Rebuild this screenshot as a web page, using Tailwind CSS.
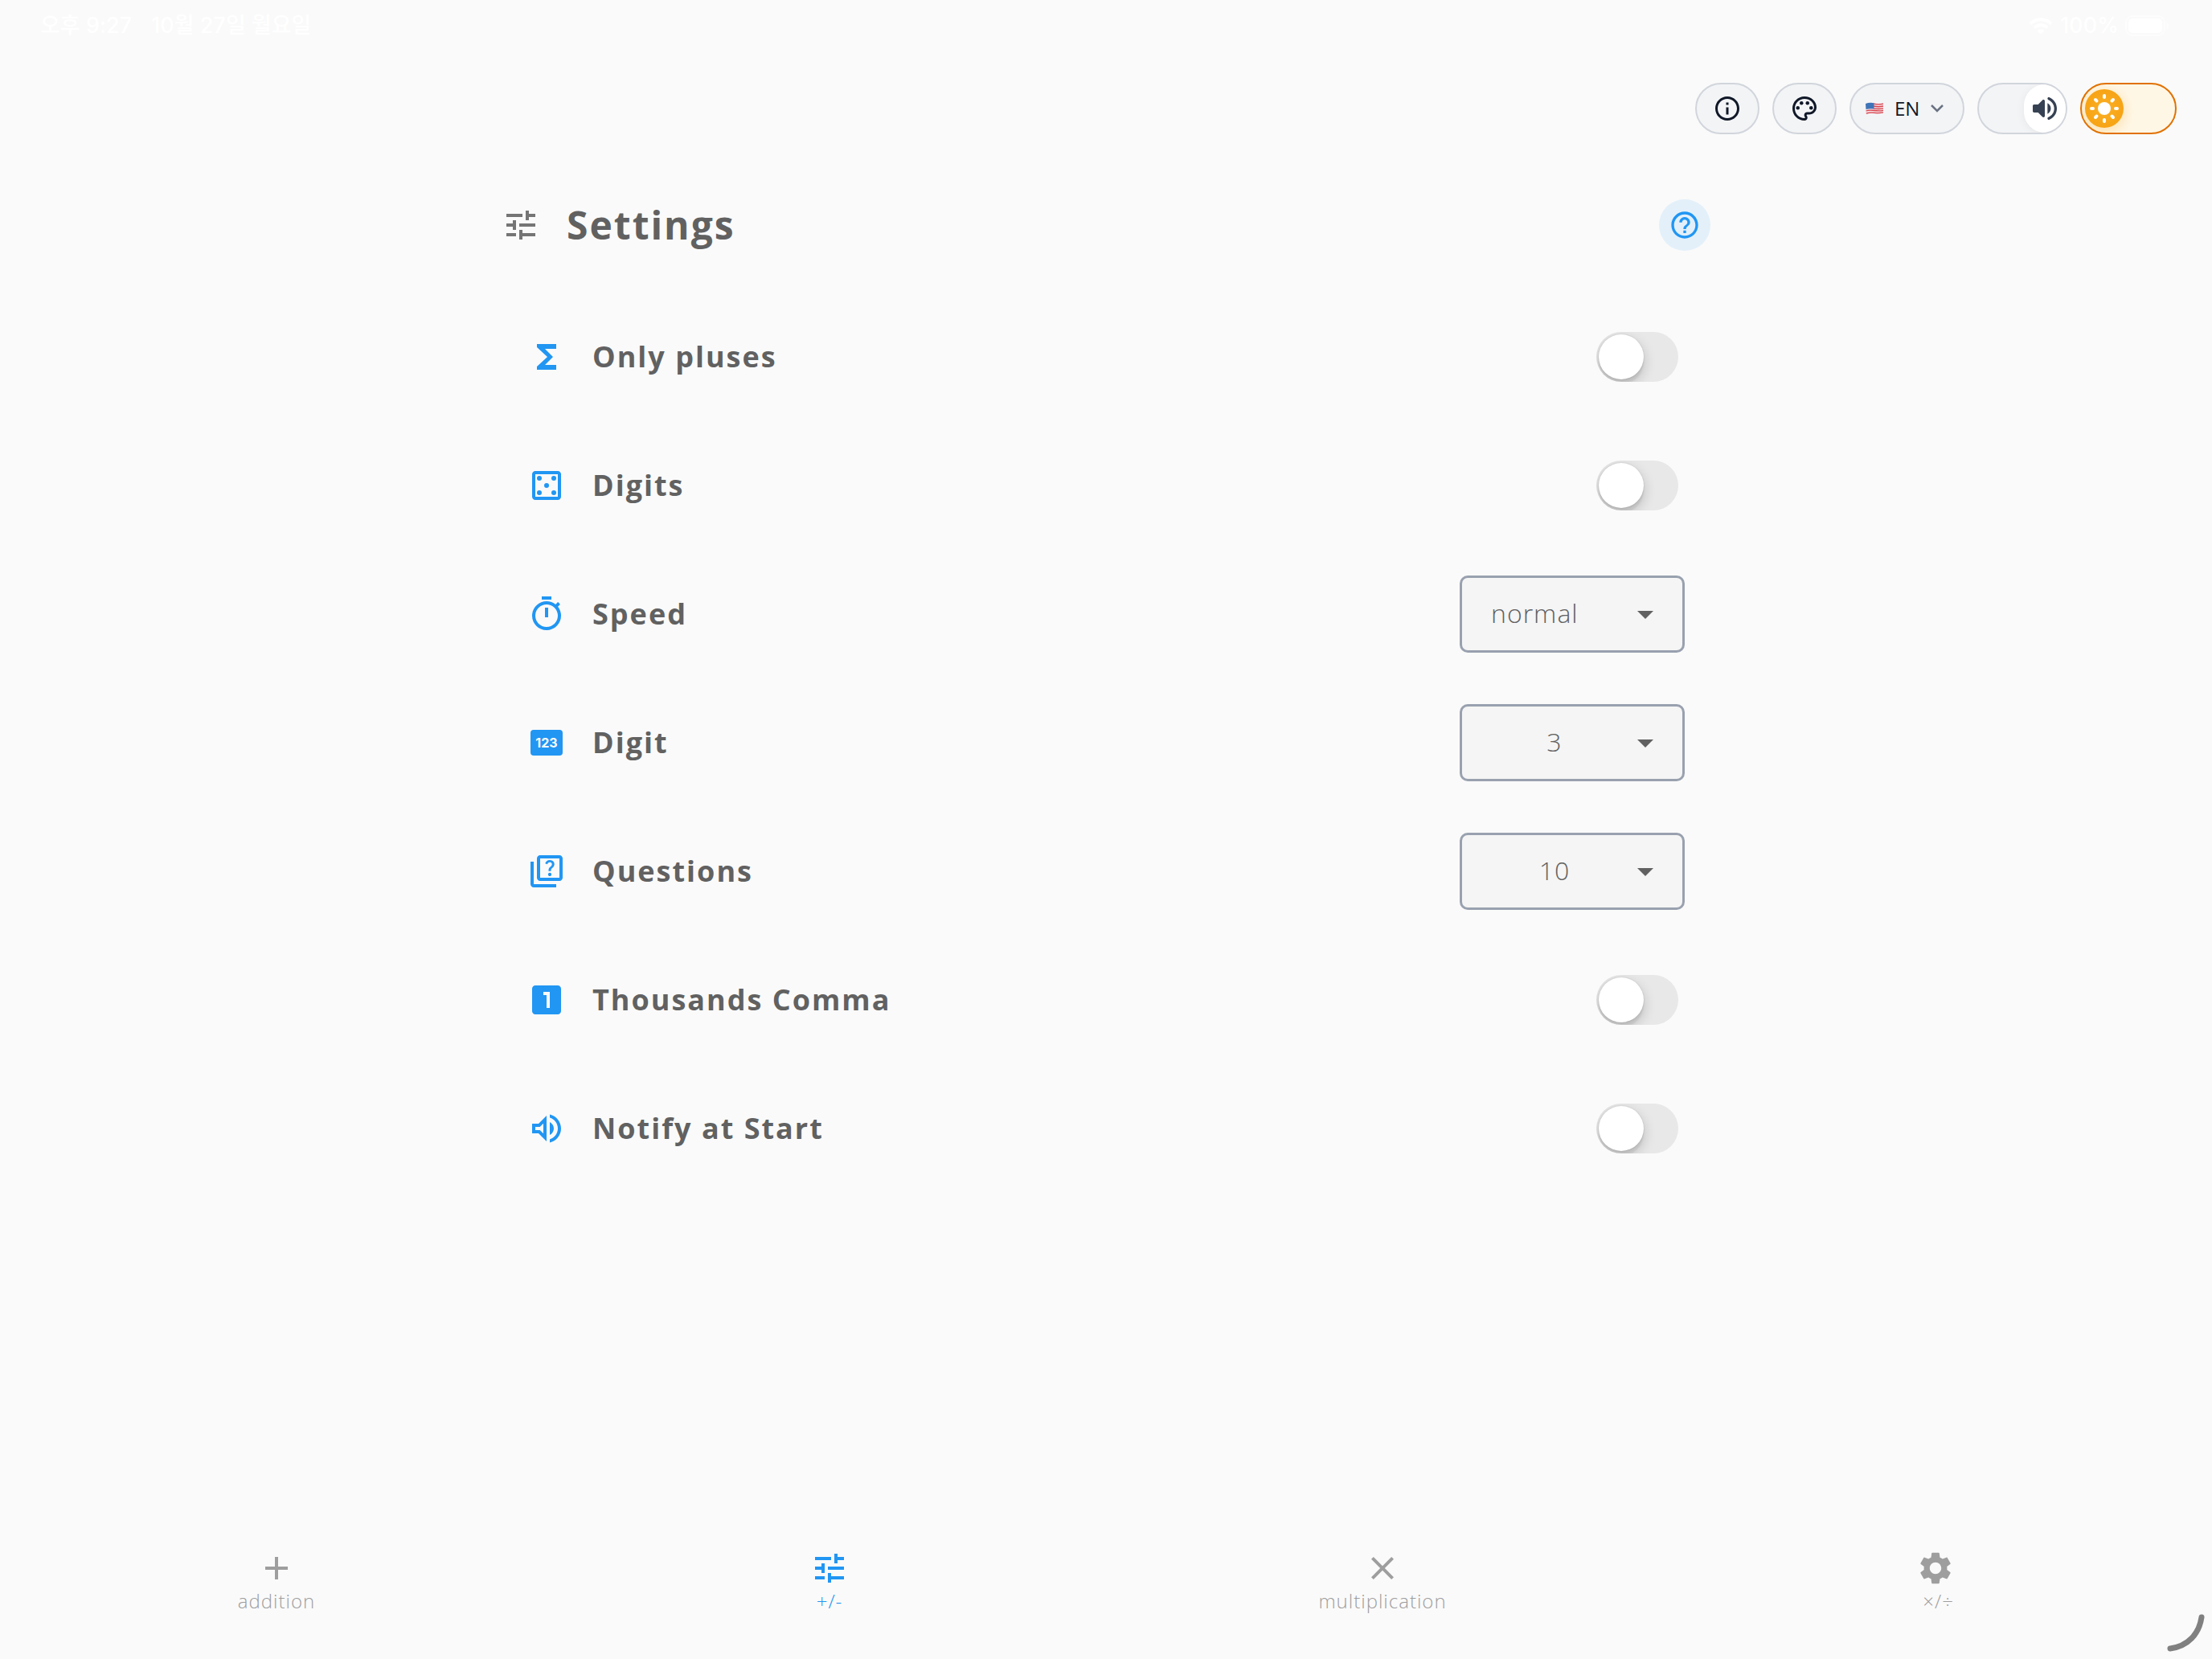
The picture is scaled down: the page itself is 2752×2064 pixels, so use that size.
<!DOCTYPE html>
<html lang="en">
<head>
<meta charset="utf-8">
<meta name="viewport" content="width=device-width, initial-scale=1">
<title>Settings</title>
<script src="https://cdn.jsdelivr.net/npm/@tailwindcss/browser@4"></script>
</head>
<body class="relative flex min-h-screen flex-col bg-[#fafafa] font-['Open_Sans',sans-serif] text-[#616161]">

  <!-- Status bar -->
  <div class="flex h-16 items-center justify-between pr-[52px] pl-[50px] font-['Inter','Noto_Sans_CJK_KR',sans-serif] text-[27px] leading-8 font-medium text-white">
    <div class="flex gap-6">
      <span>오후 9:27</span>
      <span>10월 27일 월요일</span>
    </div>
    <div class="flex items-center gap-2">
      <svg class="h-6 w-8" viewBox="0 0 32 24" fill="none" stroke="currentColor" stroke-width="4" aria-hidden="true">
        <path d="M3 9.500a18.500 18.500 0 0 1 26 0M8 14.500a11.500 11.500 0 0 1 16 0"/>
        <path d="M16 22.500l-4.500-4.500a6.500 6.500 0 0 1 9 0z" fill="currentColor" stroke="none"/>
      </svg>
      <span>100%</span>
      <svg class="h-[26px] w-14" viewBox="0 0 56 26" aria-hidden="true">
        <rect x="1" y="1" width="48" height="24" rx="8" fill="none" stroke="white" stroke-opacity=".5" stroke-width="2"/>
        <rect x="4" y="4" width="42" height="18" rx="5" fill="white"/>
        <path d="M51.500 9v8q3-1 3-4t-3-4z" fill="white" fill-opacity=".6"/>
      </svg>
    </div>
  </div>

  <!-- Quick controls -->
  <header class="mt-[39px] flex justify-end gap-4 pr-11">
    <button type="button" aria-label="Information" class="flex h-16 w-20 items-center justify-center rounded-full border-2 border-gray-300 bg-gray-100 text-gray-900">
      <svg class="size-9" viewBox="0 0 24 24" fill="currentColor"><path d="M11 7h2v2h-2zm0 4h2v6h-2zm1-9C6.480 2 2 6.480 2 12s4.480 10 10 10 10-4.480 10-10S17.520 2 12 2zm0 18c-4.410 0-8-3.590-8-8s3.590-8 8-8 8 3.590 8 8-3.590 8-8 8z"/></svg>
    </button>
    <button type="button" aria-label="Theme colour" class="flex h-16 w-20 items-center justify-center rounded-full border-2 border-gray-300 bg-gray-100 text-gray-900">
      <svg class="size-9" viewBox="0 0 24 24" fill="currentColor"><path d="M12 22C6.490 22 2 17.510 2 12S6.490 2 12 2s10 4.040 10 9c0 3.310-2.690 6-6 6h-1.770c-.28 0-.5.22-.5.5 0 .12.05.23.13.33.41.47.64 1.060.64 1.670 0 1.380-1.120 2.500-2.500 2.500zm0-18c-4.410 0-8 3.590-8 8s3.590 8 8 8c.28 0 .5-.22.5-.5 0-.16-.08-.28-.14-.35-.41-.46-.63-1.050-.63-1.650 0-1.380 1.120-2.500 2.500-2.500H16c2.210 0 4-1.790 4-4 0-3.860-3.590-7-8-7z"/><circle cx="6.500" cy="11.500" r="1.500"/><circle cx="9.500" cy="7.500" r="1.500"/><circle cx="14.500" cy="7.500" r="1.500"/><circle cx="17.500" cy="11.500" r="1.500"/></svg>
    </button>
    <button type="button" aria-label="Language: English" class="flex h-16 w-[143px] items-center rounded-full border-2 border-gray-300 bg-gray-100 pl-[18px] text-2xl leading-8 text-gray-900">
      <svg class="h-4 w-[22px]" viewBox="0 0 22 16">
        <path d="M0 2Q5 0 11 1.200T22 1V13.500Q17 15 11 14T1 15.500Z" fill="#f3dcdf"/>
        <path d="M10 2.200Q16 3.500 22 2.200M10 5Q16 6.500 22 5M10 7.800Q16 9.200 22 7.800M.5 11Q5 9.500 11 10.500T22 10.300M.8 14.200Q5 12.500 11 13.300T22 12.900" fill="none" stroke="#d9434f" stroke-width="1.300"/>
        <path d="M0 2Q5 .2 10.500 1.200V8.500Q5 7.800.5 9Z" fill="#3f74b8"/>
      </svg>
      <span class="ml-[14px]">EN</span>
      <svg class="ml-2.5 size-6 text-gray-500" viewBox="0 0 24 24" fill="none" stroke="currentColor" stroke-width="2.500"><path d="M5 8l7 7 7-7"/></svg>
    </button>
    <label class="relative block h-16 w-28 overflow-hidden rounded-full border-2 border-gray-300 bg-gray-100">
      <input type="checkbox" checked aria-label="Sound" class="absolute inset-0 appearance-none">
      <span class="absolute inset-y-0 right-0 flex w-[52px] items-center justify-center rounded-full bg-white text-gray-700 shadow-[0_2px_12px_rgba(0,0,0,0.06)]">
        <svg class="size-10" viewBox="0 0 24 24" fill="currentColor"><path d="M3 10v4c0 .55.45 1 1 1h3l3.290 3.290c.63.63 1.710.18 1.710-.71V6.410c0-.89-1.080-1.340-1.710-.71L7 9H4c-.55 0-1 .45-1 1zm13.500 2c0-1.770-1.020-3.290-2.500-4.030v8.050c1.480-.73 2.500-2.250 2.500-4.020zM14 4.450v.2c0 .38.25.71.6.85C17.180 6.530 19 9.060 19 12s-1.820 5.470-4.400 6.500c-.36.14-.6.47-.6.85v.2c0 .63.63 1.070 1.210.85C18.600 19.110 21 15.840 21 12s-2.400-7.110-5.790-8.400c-.58-.23-1.210.22-1.210.85z"/></svg>
      </span>
    </label>
    <label class="relative block h-16 w-30 overflow-hidden rounded-full border-2 border-amber-600 bg-[#fff7e6]">
      <input type="checkbox" aria-label="Dark mode" class="absolute inset-0 appearance-none">
      <span class="absolute top-1.5 left-1 flex size-12 items-center justify-center rounded-full bg-radial from-[#fbb024] to-[#f59e0b] shadow-[0_4px_16px_rgba(245,158,11,0.3)]">
        <svg class="size-10" viewBox="-20 -20 40 40" stroke="white" stroke-width="4" stroke-linecap="round"><circle r="8" fill="white" stroke="none"/><path d="M0-16v2M0 14v2M-16 0h2M14 0h2M-11-11l1.500 1.500M9.500 9.500l1.500 1.500M-11 11l1.500-1.500M9.500-9.500l1.500-1.500"/></svg>
      </span>
    </label>
  </header>

  <main class="mx-auto mt-[81px] w-full max-w-[1504px] flex-1">
    <div class="flex h-16 items-center">
      <svg class="size-12 text-[#757575]" viewBox="0 0 24 24" fill="currentColor" aria-hidden="true"><path d="M3 17v2h6v-2H3zM3 5v2h10V5H3zm10 16v-2h8v-2h-8v-2h-2v6h2zM7 9v2H3v2h4v2h2V9H7zm14 4v-2H11v2h10zm-6-4h2V7h4V5h-4V3h-2v6z"/></svg>
      <h1 class="ml-[33px] flex-1 text-5xl font-bold tracking-[2px]">Settings</h1>
      <button type="button" aria-label="Help" class="flex size-16 items-center justify-center rounded-full bg-[#e3f0fa] text-[#2196f3]">
        <svg class="size-10" viewBox="0 0 24 24" fill="currentColor"><path d="M11 18h2v-2h-2v2zm1-16C6.480 2 2 6.480 2 12s4.480 10 10 10 10-4.480 10-10S17.520 2 12 2zm0 18c-4.410 0-8-3.590-8-8s3.590-8 8-8 8 3.590 8 8-3.590 8-8 8zm0-14c-2.210 0-4 1.790-4 4h2c0-1.100.9-2 2-2s2 .9 2 2c0 2-3 1.750-3 5h2c0-2.250 3-2.500 3-5 0-2.210-1.790-4-4-4z"/></svg>
      </button>
    </div>

    <div class="mt-[52px] px-8 text-4xl font-bold tracking-[2px]">
      <div class="flex h-40 items-center gap-[33px]">
        <svg class="size-12 text-[#2196f3]" viewBox="0 0 24 24" fill="currentColor" aria-hidden="true"><path d="M18 4H6v2l6.500 6L6 18v2h12v-3h-7l5-5-5-5h7z"/></svg>
        <label for="pluses" class="flex-1">Only pluses</label>
        <input id="pluses" type="checkbox" role="switch" class="relative mr-2 h-[62px] w-[102px] appearance-none overflow-hidden rounded-full bg-[#e8e8e8] before:absolute before:top-[3px] before:left-[3px] before:size-14 before:rounded-full before:bg-white before:shadow-[0_6px_16px_rgba(0,0,0,0.2),0_6px_2px_rgba(0,0,0,0.06),0_0_2px_rgba(0,0,0,0.15)]">
      </div>
      <div class="flex h-40 items-center gap-[33px]">
        <svg class="size-12 text-[#2196f3]" viewBox="0 0 24 24" fill="currentColor" aria-hidden="true"><path fill-rule="evenodd" d="M19 3H5c-1.100 0-2 .9-2 2v14c0 1.100.9 2 2 2h14c1.100 0 2-.9 2-2V5c0-1.100-.9-2-2-2zm0 16H5V5h14v14z"/><circle cx="7.500" cy="7.500" r="1.500"/><circle cx="16.500" cy="7.500" r="1.500"/><circle cx="12" cy="12" r="1.500"/><circle cx="7.500" cy="16.500" r="1.500"/><circle cx="16.500" cy="16.500" r="1.500"/></svg>
        <label for="digits" class="flex-1">Digits</label>
        <input id="digits" type="checkbox" role="switch" class="relative mr-2 h-[62px] w-[102px] appearance-none overflow-hidden rounded-full bg-[#e8e8e8] before:absolute before:top-[3px] before:left-[3px] before:size-14 before:rounded-full before:bg-white before:shadow-[0_6px_16px_rgba(0,0,0,0.2),0_6px_2px_rgba(0,0,0,0.06),0_0_2px_rgba(0,0,0,0.15)]">
      </div>
      <div class="flex h-40 items-center gap-[33px]">
        <svg class="size-12 text-[#2196f3]" viewBox="0 0 24 24" fill="currentColor" aria-hidden="true"><path d="M15 1H9v2h6V1zm-4 13h2V8h-2v6zm8.030-6.610l1.420-1.420c-.43-.51-.9-.99-1.410-1.410l-1.420 1.420C16.070 4.740 14.120 4 12 4c-4.970 0-9 4.030-9 9s4.020 9 9 9 9-4.030 9-9c0-2.120-.74-4.070-1.970-5.610zM12 20c-3.870 0-7-3.130-7-7s3.130-7 7-7 7 3.130 7 7-3.130 7-7 7z"/></svg>
        <label for="speed" class="flex-1">Speed</label>
        <div class="relative">
          <select id="speed" class="h-24 w-70 appearance-none rounded-[10px] border-3 border-gray-400 bg-neutral-100 pr-20 pb-0.5 pl-9 text-[32px] leading-10 font-light tracking-[1px]"><option>normal</option><option>slow</option><option>fast</option></select>
          <svg class="pointer-events-none absolute top-11 right-[39px] h-2.5 w-5" viewBox="0 0 20 10" fill="currentColor" aria-hidden="true"><path d="M0 0h20L10 10z"/></svg>
        </div>
      </div>
      <div class="flex h-40 items-center gap-[33px]">
        <svg class="size-12 text-[#2196f3]" viewBox="0 0 48 48" fill="currentColor" aria-hidden="true"><rect x="4" y="8" width="40" height="32" rx="4"/><text x="24" y="30" text-anchor="middle" fill="#fafafa" class="font-['Inter',sans-serif] text-base font-bold tracking-normal">123</text></svg>
        <label for="digit" class="flex-1">Digit</label>
        <div class="relative">
          <select id="digit" class="h-24 w-70 appearance-none rounded-[10px] border-3 border-gray-400 bg-neutral-100 pr-20 pb-0.5 pl-9 text-center text-[32px] leading-10 font-light tracking-[1px]"><option>3</option><option>4</option><option>5</option></select>
          <svg class="pointer-events-none absolute top-11 right-[39px] h-2.5 w-5" viewBox="0 0 20 10" fill="currentColor" aria-hidden="true"><path d="M0 0h20L10 10z"/></svg>
        </div>
      </div>
      <div class="flex h-40 items-center gap-[33px]">
        <svg class="size-12 text-[#2196f3]" viewBox="0 0 24 24" fill="currentColor" aria-hidden="true"><path d="M4 6H2v14c0 1.100.9 2 2 2h14v-2H4V6zm16-4H8c-1.100 0-2 .9-2 2v12c0 1.100.9 2 2 2h12c1.100 0 2-.9 2-2V4c0-1.100-.9-2-2-2zm0 14H8V4h12v12z"/><path d="M13.510 10.160c.41-.73 1.180-1.160 1.630-1.800.48-.68.21-1.940-1.140-1.940-.88 0-1.320.67-1.500 1.230l-1.370-.57C11.510 5.960 12.520 5 13.990 5c1.230 0 2.080.56 2.510 1.260.37.6.58 1.730.01 2.570-.63.93-1.230 1.210-1.560 1.810-.13.24-.18.4-.18 1.180h-1.520c.01-.41-.06-1.080.26-1.660zm-.56 3.790c0-.59.47-1.040 1.050-1.040.59 0 1.040.45 1.040 1.040 0 .58-.44 1.050-1.040 1.050-.58 0-1.050-.47-1.050-1.050z"/></svg>
        <label for="questions" class="flex-1">Questions</label>
        <div class="relative">
          <select id="questions" class="h-24 w-70 appearance-none rounded-[10px] border-3 border-gray-400 bg-neutral-100 pr-20 pb-0.5 pl-9 text-center text-[32px] leading-10 font-light tracking-[1px]"><option>10</option><option>20</option><option>30</option></select>
          <svg class="pointer-events-none absolute top-11 right-[39px] h-2.5 w-5" viewBox="0 0 20 10" fill="currentColor" aria-hidden="true"><path d="M0 0h20L10 10z"/></svg>
        </div>
      </div>
      <div class="flex h-40 items-center gap-[33px]">
        <svg class="size-12 text-[#2196f3]" viewBox="0 0 24 24" fill="currentColor" aria-hidden="true"><path d="M19 3H5c-1.100 0-2 .9-2 2v14c0 1.100.9 2 2 2h14c1.100 0 2-.9 2-2V5c0-1.100-.9-2-2-2zm-5 14h-2V9h-2V7h4v10z"/></svg>
        <label for="comma" class="flex-1">Thousands Comma</label>
        <input id="comma" type="checkbox" role="switch" class="relative mr-2 h-[62px] w-[102px] appearance-none overflow-hidden rounded-full bg-[#e8e8e8] before:absolute before:top-[3px] before:left-[3px] before:size-14 before:rounded-full before:bg-white before:shadow-[0_6px_16px_rgba(0,0,0,0.2),0_6px_2px_rgba(0,0,0,0.06),0_0_2px_rgba(0,0,0,0.15)]">
      </div>
      <div class="flex h-40 items-center gap-[33px]">
        <svg class="size-12 text-[#2196f3]" viewBox="0 0 24 24" fill="currentColor" aria-hidden="true"><path d="M3 9v6h4l5 5V4L7 9H3zm7-.17v6.340L7.830 13H5v-2h2.830L10 8.830zM16.500 12c0-1.770-1.020-3.290-2.500-4.030v8.050c1.480-.73 2.500-2.250 2.500-4.020zM14 3.230v2.060c2.890.86 5 3.540 5 6.710s-2.110 5.850-5 6.710v2.060c4.010-.91 7-4.490 7-8.770s-2.990-7.860-7-8.770z"/></svg>
        <label for="notify" class="flex-1">Notify at Start</label>
        <input id="notify" type="checkbox" role="switch" class="relative mr-2 h-[62px] w-[102px] appearance-none overflow-hidden rounded-full bg-[#e8e8e8] before:absolute before:top-[3px] before:left-[3px] before:size-14 before:rounded-full before:bg-white before:shadow-[0_6px_16px_rgba(0,0,0,0.2),0_6px_2px_rgba(0,0,0,0.06),0_0_2px_rgba(0,0,0,0.15)]">
      </div>
    </div>
  </main>

  <!-- Tab bar -->
  <nav class="grid grid-cols-4 pb-14 text-2xl leading-[33px] font-light tracking-[1px] text-[#9e9e9e]">
    <a href="#addition" class="flex flex-col items-center">
      <svg class="size-12" viewBox="0 0 24 24" fill="currentColor" aria-hidden="true"><path d="M19 13h-6v6h-2v-6H5v-2h6V5h2v6h6v2z"/></svg>
      <span>addition</span>
    </a>
    <a href="#plus-minus" aria-current="page" class="flex flex-col items-center text-[#2196f3]">
      <svg class="size-12" viewBox="0 0 24 24" fill="currentColor" aria-hidden="true"><path d="M3 17v2h6v-2H3zM3 5v2h10V5H3zm10 16v-2h8v-2h-8v-2h-2v6h2zM7 9v2H3v2h4v2h2V9H7zm14 4v-2H11v2h10zm-6-4h2V7h4V5h-4V3h-2v6z"/></svg>
      <span>+/-</span>
    </a>
    <a href="#multiplication" class="flex flex-col items-center">
      <svg class="size-12" viewBox="0 0 24 24" fill="currentColor" aria-hidden="true"><path d="M19 6.410L17.590 5 12 10.590 6.410 5 5 6.410 10.590 12 5 17.590 6.410 19 12 13.410 17.590 19 19 17.590 13.410 12z"/></svg>
      <span>multiplication</span>
    </a>
    <a href="#times-divide" class="flex flex-col items-center">
      <svg class="size-12" viewBox="0 0 24 24" fill="currentColor" aria-hidden="true"><path d="M19.140 12.940c.04-.3.06-.61.06-.94 0-.32-.02-.64-.07-.94l2.030-1.580c.18-.14.23-.41.12-.61l-1.920-3.320c-.12-.22-.37-.29-.59-.22l-2.390.96c-.5-.38-1.030-.7-1.620-.94l-.36-2.540c-.04-.24-.24-.41-.48-.41h-3.840c-.24 0-.43.17-.47.41l-.36 2.540c-.59.24-1.130.57-1.620.94l-2.390-.96c-.22-.08-.47 0-.59.22L2.740 8.870c-.12.21-.08.47.12.61l2.030 1.580c-.05.3-.09.63-.09.94s.02.64.07.94l-2.030 1.580c-.18.14-.23.41-.12.61l1.920 3.320c.12.22.37.29.59.22l2.390-.96c.5.38 1.030.7 1.620.94l.36 2.540c.05.24.24.41.48.41h3.840c.24 0 .44-.17.47-.41l.36-2.540c.59-.24 1.130-.56 1.620-.94l2.390.96c.22.08.47 0 .59-.22l1.920-3.320c.12-.22.07-.47-.12-.61l-2.010-1.580zM12 15.600c-1.980 0-3.600-1.620-3.600-3.600s1.620-3.600 3.600-3.600 3.600 1.620 3.600 3.600-1.620 3.600-3.600 3.600z"/></svg>
      <span>&nbsp;×/÷</span>
    </a>
  </nav>

  <!-- Corner gesture hint -->
  <svg class="absolute right-2 bottom-2 size-12" viewBox="0 0 48 48" fill="none" stroke="#808080" stroke-width="7" stroke-linecap="round" aria-hidden="true"><path d="M43 4C40 25 26 40 4 43"/></svg>
</body>
</html>
